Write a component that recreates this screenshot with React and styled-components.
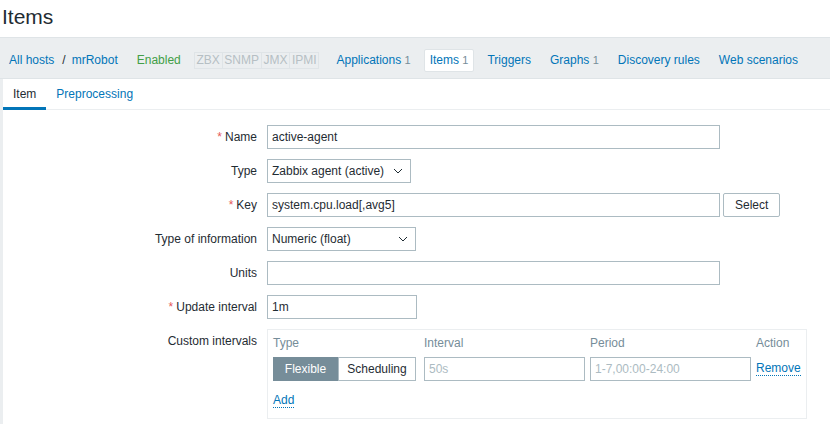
import React from "react";
import styled, { createGlobalStyle } from "styled-components";

const GlobalStyle = createGlobalStyle`
  html, body {
    margin: 0;
    padding: 0;
    background: #ffffff;
    font-family: "Liberation Sans", Arial, sans-serif;
    font-size: 12px;
    color: #1f2c33;
  }
  * { box-sizing: border-box; }
`;

const Header = styled.header`
  height: 37px;
  padding: 5px 2px 0;
`;

const Title = styled.h1`
  margin: 0;
  font-size: 21px;
  font-weight: normal;
  line-height: 24px;
  color: #1f2c33;
`;

const NavBar = styled.nav`
  display: flex;
  align-items: center;
  height: 42px;
  padding: 4px 9px 0;
  background: #ebeef0;
  border-top: 1px solid #dfe4e7;
  border-bottom: 1px solid #dfe4e7;
  white-space: nowrap;
  overflow: hidden;
`;

const Crumbs = styled.div`
  display: flex;
  align-items: center;
  margin-right: 19px;
  flex-shrink: 0;
`;

const Link = styled.a`
  color: #0275b8;
  text-decoration: none;
  cursor: pointer;
`;

const Sep = styled.span`
  color: #1f2c33;
  margin: 0 6px 0 8px;
`;

const Status = styled.span`
  color: #429e47;
  margin-right: 13px;
  flex-shrink: 0;
`;

const Badges = styled.div`
  display: flex;
  flex-shrink: 0;
  border: 1px solid #dfe4e7;
  margin-right: 11px;
`;

const Badge = styled.span`
  padding: 1px 1.75px;
  line-height: 13px;
  color: #b6bfc4;
  border-left: ${({ $first }) => ($first ? "none" : "1px solid #dfe4e7")};
`;

const NavItem = styled.a`
  flex-shrink: 0;
  color: #0275b8;
  text-decoration: none;
  padding: 4px 5px;
  line-height: 13px;
  background: ${({ $active }) => ($active ? "#ffffff" : "transparent")};
  border: 1px solid ${({ $active }) => ($active ? "#dfe4e7" : "transparent")};
  border-radius: 2px;
  margin-right: 7px;
`;

const Count = styled.span`
  color: #768d99;
  font-size: 11px;
`;

const Body = styled.div`
  background: #ebeef0;
  padding-left: 3px;
`;

const Panel = styled.div`
  background: #ffffff;
  min-height: 346px;
`;

const Tabs = styled.div`
  display: flex;
  height: 31px;
  border-bottom: 1px solid #ebeef0;
`;

const Tab = styled.a`
  display: flex;
  align-items: center;
  padding: 2px 10px 0;
  color: ${({ $active }) => ($active ? "#1f2c33" : "#0275b8")};
  border-bottom: 3px solid ${({ $active }) => ($active ? "#0275b8" : "transparent")};
  margin-bottom: -1px;
  cursor: pointer;
`;

const Form = styled.div`
  display: grid;
  grid-template-columns: 254px 1fr;
  column-gap: 10px;
  row-gap: 10px;
  padding-top: 15px;
`;

const Label = styled.label`
  text-align: right;
  line-height: 24px;
  white-space: nowrap;
`;

const Star = styled.span`
  color: #e45959;
  margin-right: 3px;
`;

const Field = styled.div`
  display: flex;
  align-items: flex-start;
  gap: 3px;
`;

const Input = styled.div`
  width: ${({ $w }) => $w}px;
  height: 24px;
  padding: 0 4px;
  line-height: 22px;
  border: 1px solid #acbbc2;
  background: #ffffff;
  color: ${({ $ph }) => ($ph ? "#acbbc2" : "#1f2c33")};
  white-space: nowrap;
  overflow: hidden;
`;

const Select = styled.div`
  display: flex;
  align-items: center;
  justify-content: space-between;
  width: ${({ $w }) => $w}px;
  height: 24px;
  padding: 0 4px 0 4px;
  border: 1px solid #acbbc2;
  background: #ffffff;
`;

const Button = styled.button`
  height: 24px;
  padding: 0 11px;
  font: inherit;
  color: #1f2c33;
  background: #ffffff;
  border: 1px solid #acbbc2;
  border-radius: 2px;
`;

const Intervals = styled.div`
  width: 540px;
  border: 1px solid #ebeef0;
  padding: 5px 5px 10px;
  display: grid;
  grid-template-columns: 151px 166px 166px auto;
  align-items: center;
`;

const ColHead = styled.div`
  color: #768d99;
  line-height: 16px;
  height: 22px;
`;

const Segment = styled.div`
  display: flex;
  width: 143px;
`;

const SegButton = styled.div`
  height: 24px;
  line-height: 22px;
  width: ${({ $w }) => $w}px;
  text-align: center;
  border: 1px solid ${({ $on }) => ($on ? "#768d99" : "#acbbc2")};
  background: ${({ $on }) => ($on ? "#768d99" : "#ffffff")};
  color: ${({ $on }) => ($on ? "#ffffff" : "#1f2c33")};
`;

const ActionLink = styled.a`
  color: #0275b8;
  border-bottom: 1px dotted #0275b8;
  line-height: 13px;
  cursor: pointer;
  justify-self: start;
`;

const AddRow = styled.div`
  grid-column: 1 / -1;
  padding-top: 13px;
  display: flex;
`;

const Chevron = () => (
  <svg width="10" height="6" viewBox="0 0 10 6" style={{ marginRight: 3 }}>
    <path d="M1 1 L5 5 L9 1" fill="none" stroke="#1f2c33" strokeWidth="1" />
  </svg>
);

export default function App() {
  return (
    <>
      <GlobalStyle />
      <Header>
        <Title>Items</Title>
      </Header>
      <NavBar>
        <Crumbs>
          <Link>All hosts</Link>
          <Sep>/</Sep>
          <Link>mrRobot</Link>
        </Crumbs>
        <Status>Enabled</Status>
        <Badges>
          <Badge $first>ZBX</Badge>
          <Badge>SNMP</Badge>
          <Badge>JMX</Badge>
          <Badge>IPMI</Badge>
        </Badges>
        <NavItem>
          Applications <Count>1</Count>
        </NavItem>
        <NavItem $active>
          Items <Count>1</Count>
        </NavItem>
        <NavItem>Triggers</NavItem>
        <NavItem>
          Graphs <Count>1</Count>
        </NavItem>
        <NavItem>Discovery rules</NavItem>
        <NavItem>Web scenarios</NavItem>
      </NavBar>
      <Body>
        <Panel>
          <Tabs>
            <Tab $active>Item</Tab>
            <Tab>Preprocessing</Tab>
          </Tabs>
          <Form>
            <Label>
              <Star>*</Star>Name
            </Label>
            <Field>
              <Input $w={453}>active-agent</Input>
            </Field>

            <Label>Type</Label>
            <Field>
              <Select $w={144}>
                Zabbix agent (active)
                <Chevron />
              </Select>
            </Field>

            <Label>
              <Star>*</Star>Key
            </Label>
            <Field>
              <Input $w={453}>system.cpu.load[,avg5]</Input>
              <Button>Select</Button>
            </Field>

            <Label>Type of information</Label>
            <Field>
              <Select $w={149}>
                Numeric (float)
                <Chevron />
              </Select>
            </Field>

            <Label>Units</Label>
            <Field>
              <Input $w={453} />
            </Field>

            <Label>
              <Star>*</Star>Update interval
            </Label>
            <Field>
              <Input $w={150}>1m</Input>
            </Field>

            <Label>Custom intervals</Label>
            <Field>
              <Intervals>
                <ColHead>Type</ColHead>
                <ColHead>Interval</ColHead>
                <ColHead>Period</ColHead>
                <ColHead>Action</ColHead>
                <Segment>
                  <SegButton $on $w={65}>
                    Flexible
                  </SegButton>
                  <SegButton $w={78}>Scheduling</SegButton>
                </Segment>
                <Input $w={161} $ph>
                  50s
                </Input>
                <Input $w={161} $ph>
                  1-7,00:00-24:00
                </Input>
                <ActionLink>Remove</ActionLink>
                <AddRow>
                  <ActionLink>Add</ActionLink>
                </AddRow>
              </Intervals>
            </Field>
          </Form>
        </Panel>
      </Body>
    </>
  );
}
